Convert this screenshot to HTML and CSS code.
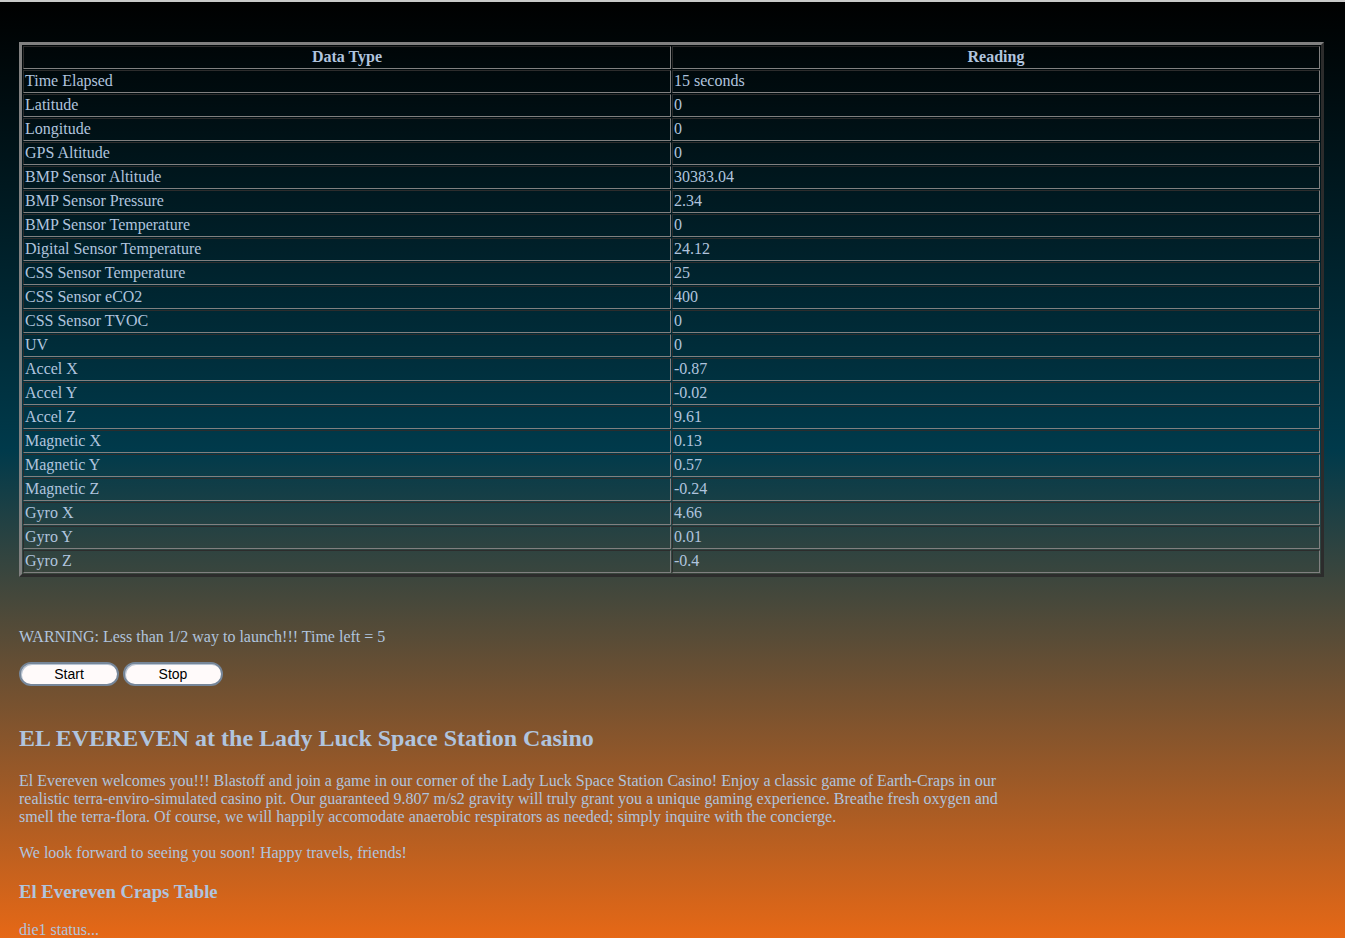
FILE: index.html
```html
<!DOCTYPE html>
<html lang="en">
<head>
<meta charset="utf-8">
<title>El Evereven</title>
<link rel="stylesheet" href="styles.css">
</head>
<body>
<table class="data-table">
  <thead>
    <tr><th>Data Type</th><th>Reading</th></tr>
  </thead>
  <tbody>
    <tr><td>Time Elapsed</td><td>15 seconds</td></tr>
    <tr><td>Latitude</td><td>0</td></tr>
    <tr><td>Longitude</td><td>0</td></tr>
    <tr><td>GPS Altitude</td><td>0</td></tr>
    <tr><td>BMP Sensor Altitude</td><td>30383.04</td></tr>
    <tr><td>BMP Sensor Pressure</td><td>2.34</td></tr>
    <tr><td>BMP Sensor Temperature</td><td>0</td></tr>
    <tr><td>Digital Sensor Temperature</td><td>24.12</td></tr>
    <tr><td>CSS Sensor Temperature</td><td>25</td></tr>
    <tr><td>CSS Sensor eCO2</td><td>400</td></tr>
    <tr><td>CSS Sensor TVOC</td><td>0</td></tr>
    <tr><td>UV</td><td>0</td></tr>
    <tr><td>Accel X</td><td>-0.87</td></tr>
    <tr><td>Accel Y</td><td>-0.02</td></tr>
    <tr><td>Accel Z</td><td>9.61</td></tr>
    <tr><td>Magnetic X</td><td>0.13</td></tr>
    <tr><td>Magnetic Y</td><td>0.57</td></tr>
    <tr><td>Magnetic Z</td><td>-0.24</td></tr>
    <tr><td>Gyro X</td><td>4.66</td></tr>
    <tr><td>Gyro Y</td><td>0.01</td></tr>
    <tr><td>Gyro Z</td><td>-0.4</td></tr>
  </tbody>
</table>

<p class="warning">WARNING: Less than 1/2 way to launch!!! Time left = 5</p>

<div class="controls">
  <button class="btn" type="button">Start</button>
  <button class="btn" type="button">Stop</button>
</div>

<section class="casino">
  <h2 class="title">EL EVEREVEN at the Lady Luck Space Station Casino</h2>
  <p class="intro">El Evereven welcomes you!!! Blastoff and join a game in our corner of the Lady Luck Space Station Casino! Enjoy a classic game of Earth-Craps in our realistic terra-enviro-simulated casino pit. Our guaranteed 9.807 m/s2 gravity will truly grant you a unique gaming experience. Breathe fresh oxygen and smell the terra-flora. Of course, we will happily accomodate anaerobic respirators as needed; simply inquire with the concierge.<br><br>We look forward to seeing you soon! Happy travels, friends!</p>
  <h3 class="subtitle">El Evereven Craps Table</h3>
  <p class="status">die1 status...</p>
</section>
</body>
</html>
```

FILE: styles.css
```css
html {
  margin: 0;
  padding: 0;
  border-top: 2px solid #c9c9c9;
  min-height: 100%;
  background: linear-gradient(to bottom, #000000 0%, #003a4b 48%, #e66816 100%) fixed;
}

body {
  margin: 0;
  padding: 40px 21px 40px 19px;
  font-family: "Liberation Serif", "Times New Roman", serif;
  font-size: 16px;
  line-height: 18px;
  color: #b0c4de;
}

.data-table {
  width: 100%;
  border: 3px outset #808080;
  border-spacing: 1px;
  table-layout: fixed;
  color: #b0c4de;
}

.data-table th,
.data-table td {
  border: 1px inset #808080;
  padding: 1px 1px 2px;
  height: 23px;
  box-sizing: border-box;
  line-height: 18px;
  text-align: left;
  font-weight: normal;
  font-size: 16px;
}

.data-table th {
  text-align: center;
  font-weight: bold;
}

.warning {
  margin: 51px 0 0;
}

.controls {
  display: flex;
  gap: 4px;
  margin-top: 16px;
}

.btn {
  width: 100px;
  height: 24px;
  padding: 0;
  border: 2px solid #768699;
  border-radius: 12px;
  background: #fffafa;
  color: #000;
  font-family: "Liberation Sans", Arial, sans-serif;
  font-size: 14px;
  box-shadow: inset 1px 1px 0 #b9c4d2;
}

.casino {
  max-width: 1000px;
}

.title {
  margin: 38px 0 0;
  font-size: 24px;
  line-height: 28px;
  font-weight: bold;
}

.intro {
  margin: 20px 0 0;
}

.subtitle {
  margin: 19px 0 0;
  font-size: 18.72px;
  line-height: 22px;
  font-weight: bold;
}

.status {
  margin: 18px 0 0;
}
```
